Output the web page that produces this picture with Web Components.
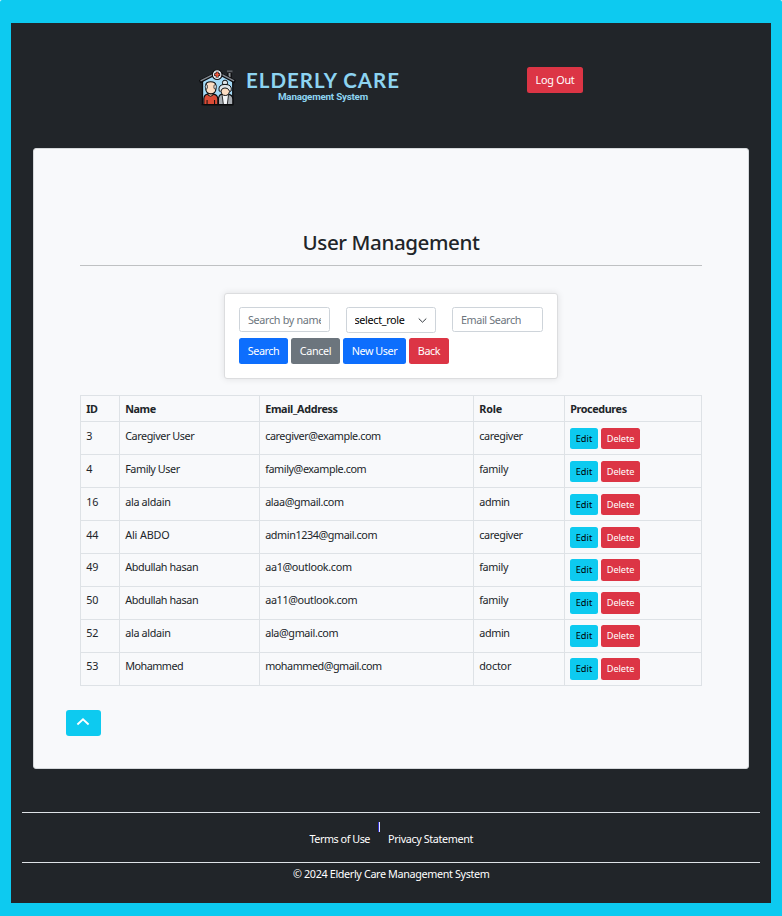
<!DOCTYPE html>
<html lang="en">
<head>
<meta charset="utf-8">
<title>User Management</title>
<style>
html,body{margin:0;background:#fff}
body{font-family:"Noto Sans","Open Sans",sans-serif;font-size:10.8px;line-height:16px;color:#212529}
</style>
</head>
<body>
<user-admin-page></user-admin-page>
<script>
const attach = (el, html) => { const r = el.attachShadow({mode:'open'}); r.innerHTML = html; return r; };

/* Text run that spreads its letters over a set width. */
customElements.define('fit-text', class extends HTMLElement {
  connectedCallback(){
    if (this.shadowRoot) return;
    attach(this, '<style>:host{display:inline-block;white-space:nowrap}span{display:inline-block}</style><span><slot></slot></span>');
    const w = +this.getAttribute('w'), s = this.shadowRoot.querySelector('span');
    if (!w) return;
    const n = this.textContent.length, now = s.getBoundingClientRect().width;
    s.style.letterSpacing = ((w - now) / n).toFixed(3) + 'px';
    this.style.width = w + 'px';
  }
});

customElements.define('ui-button', class extends HTMLElement {
  connectedCallback(){
    if (this.shadowRoot) return;
    const kinds = {primary:['#0d6efd','#fff'],secondary:['#6c757d','#fff'],danger:['#dc3545','#fff'],info:['#0dcaf0','#000']};
    const [bg, fg] = kinds[this.getAttribute('kind')];
    attach(this, `<style>:host{display:block;flex:none;width:${this.getAttribute('width')}px;height:${this.getAttribute('height')||26}px}
      button{all:unset;box-sizing:border-box;width:100%;height:100%;display:flex;align-items:center;justify-content:center;background:${bg};color:${fg};border-radius:2.5px;cursor:pointer}</style>
      <button><slot></slot></button>`);
  }
});

customElements.define('ui-field', class extends HTMLElement {
  connectedCallback(){
    if (this.shadowRoot) return;
    const sel = this.hasAttribute('select');
    attach(this, `<style>:host{display:flex;box-sizing:border-box;align-items:center;flex:none;width:${sel?90:91}px;height:${sel?26:25}px;
      border:1px solid #ced4da;border-radius:2.5px;background:#fff;color:${sel?'#000':'#6c757d'};padding:0 ${sel?'8px 0 7.5px':'8px'};justify-content:space-between}
      div{overflow:hidden;white-space:nowrap}svg{flex:none}</style>
      <div><slot></slot></div>${sel?'<svg width="9" height="7" viewBox="0 0 9 7"><path d="M1 1.8 4.5 5.2 8 1.8" fill="none" stroke="#343a40" stroke-width="1" stroke-linecap="round"/></svg>':''}`);
  }
});

customElements.define('brand-logo', class extends HTMLElement {
  connectedCallback(){
    attach(this, `<style>:host{display:flex;width:203px;height:46px}
      .words{margin-left:7px;width:153px;display:flex;flex-direction:column;color:#8dd4f1}
      .a{font:700 20.5px/24px Lato,sans-serif;margin-top:4px;height:24px}
      .b{font:700 9.8px/12px Roboto,sans-serif;padding-left:32px;height:12px;margin-top:-1px}</style>
    <svg width="44" height="46" viewBox="0 0 132 138">
      <path d="M20 53 66 22l46 31v68H20z" fill="#a5daf7"/>
      <path d="M98 24h10v20l-10-7z" fill="#8f9499" stroke="#0b0c0e" stroke-width="4"/>
      <path d="M95 21h17" stroke="#5a5e63" stroke-width="6"/>
      <path d="M20 50V121M113 50v71" stroke="#0b0c0e" stroke-width="4"/>
      <path d="M11 53 66 25l54 28" fill="none" stroke="#0b0c0e" stroke-width="10" stroke-linejoin="round"/>
      <path d="M14 50 66 24l51 26" fill="none" stroke="#858a91" stroke-width="4"/>
      <circle cx="65" cy="31" r="15" fill="#e9edf2" stroke="#0b0c0e" stroke-width="3.5"/>
      <path d="M65 22v18M56 31h18" stroke="#0b0c0e" stroke-width="9"/>
      <path d="M65 24v14M58 31h14" stroke="#f0573d" stroke-width="5"/>
      <path d="M24 123v-18q1-13 12-14h17q13 1 14 15v17z" fill="#da4c36" stroke="#0b0c0e" stroke-width="3.5"/>
      <path d="M37 84h15v10q-7 7-15 0z" fill="#f3c7a5" stroke="#0b0c0e" stroke-width="3"/>
      <path d="M30 64q0-11 15-11t16 11v12q-1 13-15 14-15-1-16-14z" fill="#fbdcc2" stroke="#0b0c0e" stroke-width="3.5"/>
      <path d="M31 76q-6-8 0-15l4 3v9zM60 76q6-8 0-15l-5 3v9z" fill="#d5d9dd" stroke="#0b0c0e" stroke-width="2"/>
      <path d="M34 123v-14M57 123v-14" stroke="#0b0c0e" stroke-width="3"/>
      <path d="M69 123v-20q3-12 13-12h15q15 1 16 15v17z" fill="#a9aeb3" stroke="#0b0c0e" stroke-width="3.5"/>
      <path d="M80 92h20l-4 31H84z" fill="#f4f6f8" stroke="#0b0c0e" stroke-width="2.5"/>
      <circle cx="89" cy="56" r="8" fill="#e0e4e8" stroke="#0b0c0e" stroke-width="3"/>
      <path d="M77 75q0-8 13-8t13 8v7q-2 13-13 13-12 0-13-13z" fill="#fbdcc2" stroke="#0b0c0e" stroke-width="3"/>
      <path d="M71 81q-4-20 18-20 23 0 19 20-4 4-7-2-2-7-12-7t-11 7q-3 6-7 2z" fill="#e0e4e8" stroke="#0b0c0e" stroke-width="3"/>
      <path d="M17 123h98" stroke="#0b0c0e" stroke-width="4"/>
    </svg>
    <div class="words"><fit-text class="a" w="154">ELDERLY CARE</fit-text><fit-text class="b" w="90">Management System</fit-text></div>`);
  }
});

customElements.define('site-header', class extends HTMLElement {
  connectedCallback(){
    attach(this, `<style>:host{display:flex;box-sizing:border-box;height:125px;padding:41px 0 0 185px}ui-button{margin:3px 0 0 128px}</style>
    <brand-logo></brand-logo><ui-button kind="danger" width="56"><fit-text w="39">Log Out</fit-text></ui-button>`);
  }
});

customElements.define('search-panel', class extends HTMLElement {
  connectedCallback(){
    attach(this, `<style>:host{display:block;box-sizing:border-box;width:334px;height:86px;margin:27px auto 0;border:1px solid #dcdddf;border-radius:3px;background:#fff;padding:13px 14px;box-shadow:0 0 7px rgba(0,0,0,.1)}
      .f{display:flex;gap:16px;height:31px}.b{display:flex;gap:3px}</style>
    <div class="f"><ui-field><fit-text w="76">Search by name</fit-text></ui-field>
    <ui-field select><fit-text w="50">select_role</fit-text></ui-field>
    <ui-field><fit-text w="60">Email Search</fit-text></ui-field></div>
    <div class="b"><ui-button kind="primary" width="49"><fit-text w="31.5">Search</fit-text></ui-button>
    <ui-button kind="secondary" width="49"><fit-text w="31.5">Cancel</fit-text></ui-button>
    <ui-button kind="primary" width="63"><fit-text w="45.5">New User</fit-text></ui-button>
    <ui-button kind="danger" width="40"><fit-text w="22.5">Back</fit-text></ui-button></div>`);
  }
});

customElements.define('user-table', class extends HTMLElement {
  connectedCallback(){
    const rows = [
      ['3',6,'Caregiver User',69,'caregiver@example.com',115.5,'caregiver',43.5],
      ['4',6,'Family User',54.5,'family@example.com',101,'family',29],
      ['16',12,'ala aldain',45.5,'alaa@gmail.com',78.5,'admin',30.5],
      ['44',12,'Ali ABDO',44.5,'admin1234@gmail.com',112,'caregiver',43.5],
      ['49',12,'Abdullah hasan',73,'aa1@outlook.com',86.5,'family',29],
      ['50',12,'Abdullah hasan',73,'aa11@outlook.com',92,'family',29],
      ['52',12,'ala aldain',45.5,'ala@gmail.com',73,'admin',30.5],
      ['53',12,'Mohammed',58,'mohammed@gmail.com',116.5,'doctor',32]];
    const cell = (t, w) => `<div class="c"><fit-text w="${w}">${t}</fit-text></div>`;
    attach(this, `<style>:host{display:block;box-sizing:border-box;width:622px;margin:16px 0 0 46px;border:solid #dee2e6;border-width:1px 0 0 1px}
      .r{display:grid;grid-template-columns:39px 140px 214px 91px 137px;height:33px}
      .h{height:26px;font-weight:700}
      .r>div{box-sizing:border-box;border:solid #dee2e6;border-width:0 1px 1px 0;padding:6px 0 0 5.2px}
      .h>div{padding-top:5px}
      .low>.c{padding-top:5px}
      .r>.act{display:flex;gap:3px;padding-left:5px;font-size:9.2px;line-height:14px}
      .low>.act{padding-top:5px}</style>
      <div class="r h">${cell('ID',11.5)}${cell('Name',30.5)}${cell('Email_Address',72.5)}${cell('Role',23)}${cell('Procedures',56.5)}</div>` +
      rows.map((r,i)=>`<div class="r${i>3?' low':''}">${cell(r[0],r[1])}${cell(r[2],r[3])}${cell(r[4],r[5])}${cell(r[6],r[7])}
        <div class="act"><ui-button kind="info" width="28" height="${i>3?22:21}"><fit-text w="16.5">Edit</fit-text></ui-button><ui-button kind="danger" width="39" height="${i>3?22:21}"><fit-text w="27.5">Delete</fit-text></ui-button></div></div>`).join(''));
  }
});

customElements.define('content-card', class extends HTMLElement {
  connectedCallback(){
    attach(this, `<style>:host{display:block;box-sizing:border-box;width:716px;height:621px;margin-left:22px;background:#f8f9fb;border:1px solid #d5d8db;border-radius:3px}
      h1{margin:78px 46px 0;height:39px;border-bottom:1px solid #bfc1c3;box-sizing:border-box;text-align:center;font-size:20.6px;line-height:30px;font-weight:500}
      .up{display:flex;justify-content:center;box-sizing:border-box;padding-top:8px;width:35px;height:26px;background:#0dcaf0;border-radius:3px;margin:24px 0 0 32px}
      .up svg{margin-right:1px}</style>
      <h1><fit-text w="177">User Management</fit-text></h1><search-panel></search-panel><user-table></user-table>
      <div class="up"><svg width="14" height="8" viewBox="0 0 14 8"><path d="M1.4 6.5 7 1.3l5.6 5.2" fill="none" stroke="#fff" stroke-width="1.8"/></svg></div>`);
  }
});

customElements.define('site-footer', class extends HTMLElement {
  connectedCallback(){
    attach(this, `<style>:host{display:block;margin:43px 11px 0;color:#fff}
      .links{box-sizing:border-box;height:51px;border:solid #dee2e6;border-width:1px 0;display:flex;padding:8px 0 0 287.5px}
      .links fit-text{margin-top:10px}
      i{width:1px;height:10px;background:#e4e4ff;border-left:1px solid #3030c8;margin:1px 8px 0}
      .copy{padding:3px 0 0 271px}</style>
      <div class="links"><fit-text w="60.5">Terms of Use</fit-text><i></i><fit-text w="85">Privacy Statement</fit-text></div>
      <div class="copy"><fit-text w="196.5">© 2024 Elderly Care Management System</fit-text></div>`);
  }
});

customElements.define('user-admin-page', class extends HTMLElement {
  connectedCallback(){
    attach(this, `<style>:host{display:block;box-sizing:border-box;width:782px;height:916px;padding:23px 11px 13px;background:#0dcaf0;border-radius:2px 2px 0 0}
      main{height:880px;background:#212529;overflow:hidden}</style>
      <main><site-header></site-header><content-card></content-card><site-footer></site-footer></main>`);
  }
});
</script>
</body>
</html>
